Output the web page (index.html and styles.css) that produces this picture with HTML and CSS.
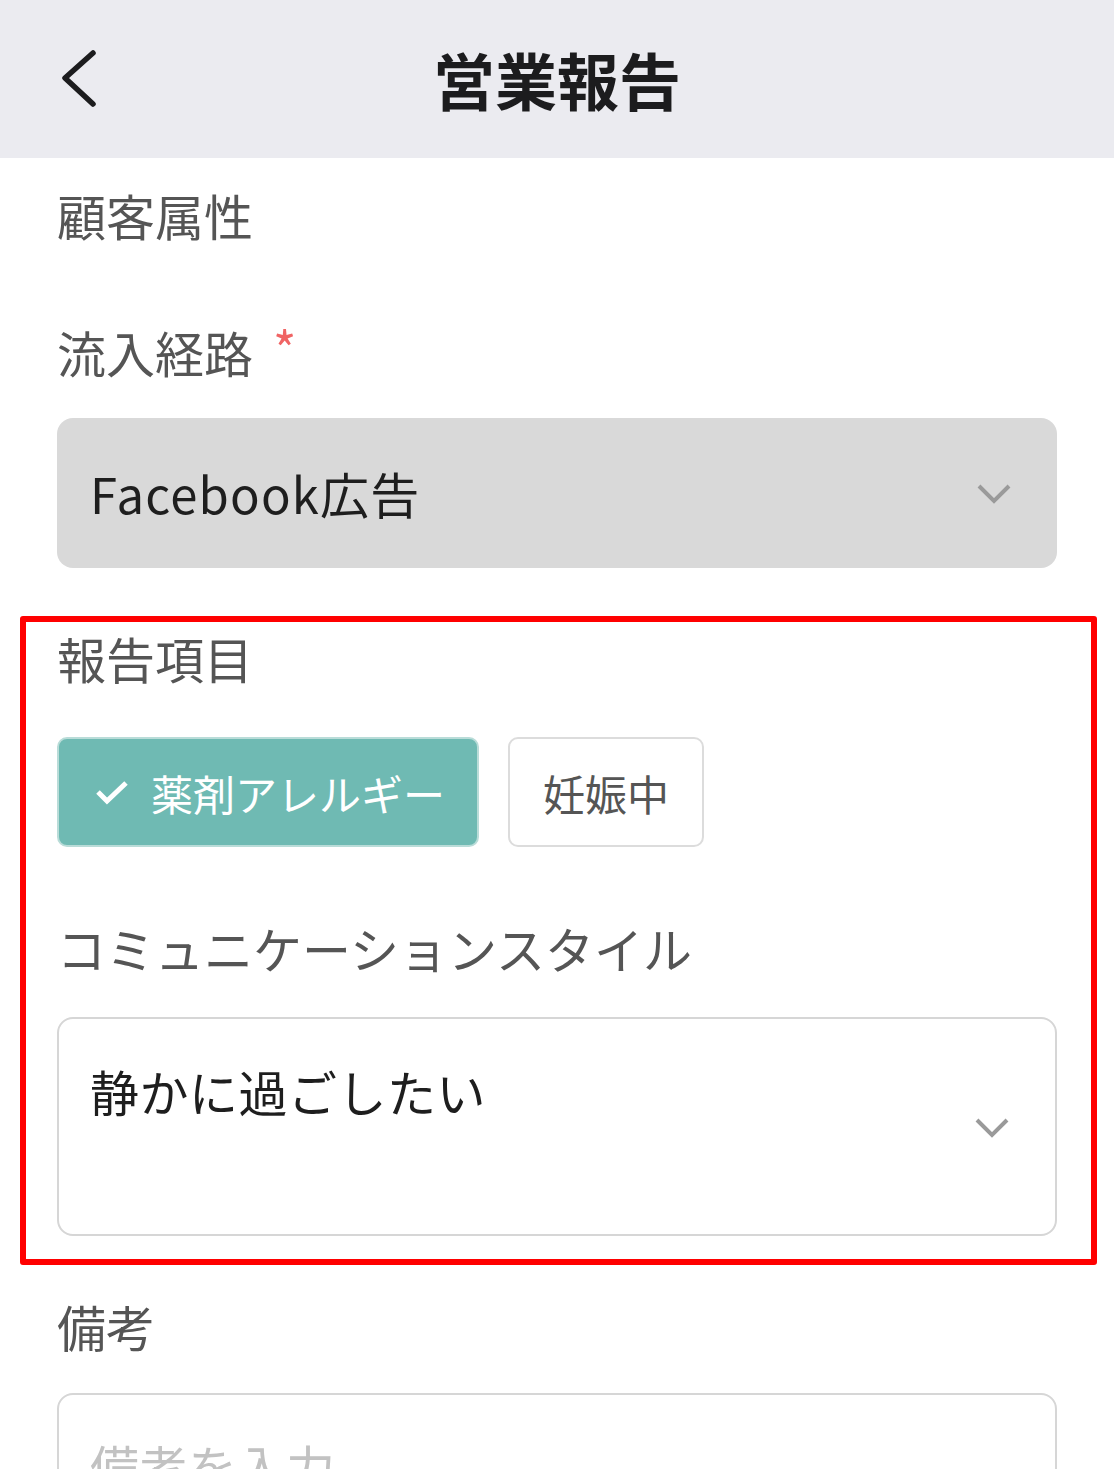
FILE: index.html
```html
<!DOCTYPE html>
<html lang="ja">
<head>
<meta charset="utf-8">
<title>営業報告</title>
<link rel="stylesheet" href="styles.css">
</head>
<body>
<div class="header">
  <a class="back" href="#">
    <svg width="40" height="60" viewBox="0 0 40 60"><path d="M33 4 L5 29 L33 55" fill="none" stroke="#1c1c1e" stroke-width="5.5" stroke-linecap="round" stroke-linejoin="round"/></svg>
  </a>
  <h1 class="title">営業報告</h1>
</div>

<div class="content">
  <div class="label first">顧客属性</div>

  <div class="label gap-lg">流入経路<span class="req">*</span></div>
  <div class="select disabled gap-md">
    <span class="select-text latin">Facebook広告</span>
    <svg class="chev" width="36" height="22" viewBox="0 0 36 22"><path d="M3 3 L18 18 L33 3" fill="none" stroke="#9a9a9a" stroke-width="4"/></svg>
  </div>

  <div class="mark">
    <div class="label">報告項目</div>
    <div class="chips">
      <div class="chip on">
        <svg width="34" height="26" viewBox="0 0 34 26"><path d="M3 13 L12 22 L31 4" fill="none" stroke="#fff" stroke-width="5"/></svg>
        <span>薬剤アレルギー</span>
      </div>
      <div class="chip">妊娠中</div>
    </div>

    <div class="label gap-xl">コミュニケーションスタイル</div>
    <div class="select tall gap-sm">
      <span class="select-text top">静かに過ごしたい</span>
      <svg class="chev" width="36" height="22" viewBox="0 0 36 22"><path d="M3 3 L18 18 L33 3" fill="none" stroke="#9a9a9a" stroke-width="4"/></svg>
    </div>
  </div>

  <div class="label after-mark">備考</div>
  <div class="textarea gap-xs">
    <span class="placeholder">備考を入力</span>
  </div>
</div>
</body>
</html>
```

FILE: styles.css
```css
body {margin: 0;padding: 0;background: #fff;font-family: "Noto Sans CJK JP", "Noto Sans", sans-serif;color: #222;}
.header {height: 158px;background: #ebebf0;display: flex;align-items: center;justify-content: center;position: relative;}
.back {position: absolute;left: 60px;top: 49px;display: block;width: 40px;height: 60px;}
.title {margin: 0;font-size: 62px;font-weight: 700;color: #1c1c1e;letter-spacing: 0;line-height: 1;}
.content {padding: 0 57px;overflow: hidden;height: 1311px;}
.label {font-size: 49px;line-height: 66px;color: #555;height: 72px;}
.label.first {margin-top: 24px;}
.gap-lg {margin-top: 60px;}
.gap-xl {margin-top: 68px;}
.gap-md {margin-top: 32px;}
.gap-sm {margin-top: 30px;}
.gap-xs {margin-top: 28px;}
.req {color: #f06464;font-size: 50px;margin-left: 20px;vertical-align: 4px;}
.select {box-sizing: border-box;height: 150px;border-radius: 16px;display: flex;align-items: center;justify-content: space-between;padding: 0 45px 0 33px;}
.select.disabled {background: #d9d9d9;}
.select.tall {height: 219px;border: 2px solid #d6d6d6;background: #fff;padding-left: 31px;}
.select-text {font-size: 49px;line-height: 70px;color: #1e1e1e;letter-spacing: 0.5px;}
.select-text.latin {letter-spacing: 1.2px;}
.select-text.top {align-self: flex-start;margin-top: 37px;}
.chev {flex: none;margin-top: 2px;}
.mark {border: 6px solid #ff0000;border-radius: 3px;margin: 48px -40px 0 -37px;padding: 3px 34px 23px 31px;}
.chips {display: flex;gap: 29px;margin-top: 40px;}
.chip {box-sizing: border-box;height: 110px;border-radius: 10px;border: 2px solid #dcdcdc;display: flex;align-items: center;padding: 0 33px;font-size: 42px;color: #555;background: #fff;}
.chip.on {background: #6fbab3;border-color: #b9dcd8;color: #fff;padding: 0 32px 0 36px;gap: 22px;}
.after-mark {margin-top: 28px;}
.textarea {box-sizing: border-box;height: 220px;border: 2px solid #d6d6d6;border-radius: 16px;padding: 36px 31px 0;}
.placeholder {font-size: 49px;line-height: 70px;color: #c2c2c2;}
```
